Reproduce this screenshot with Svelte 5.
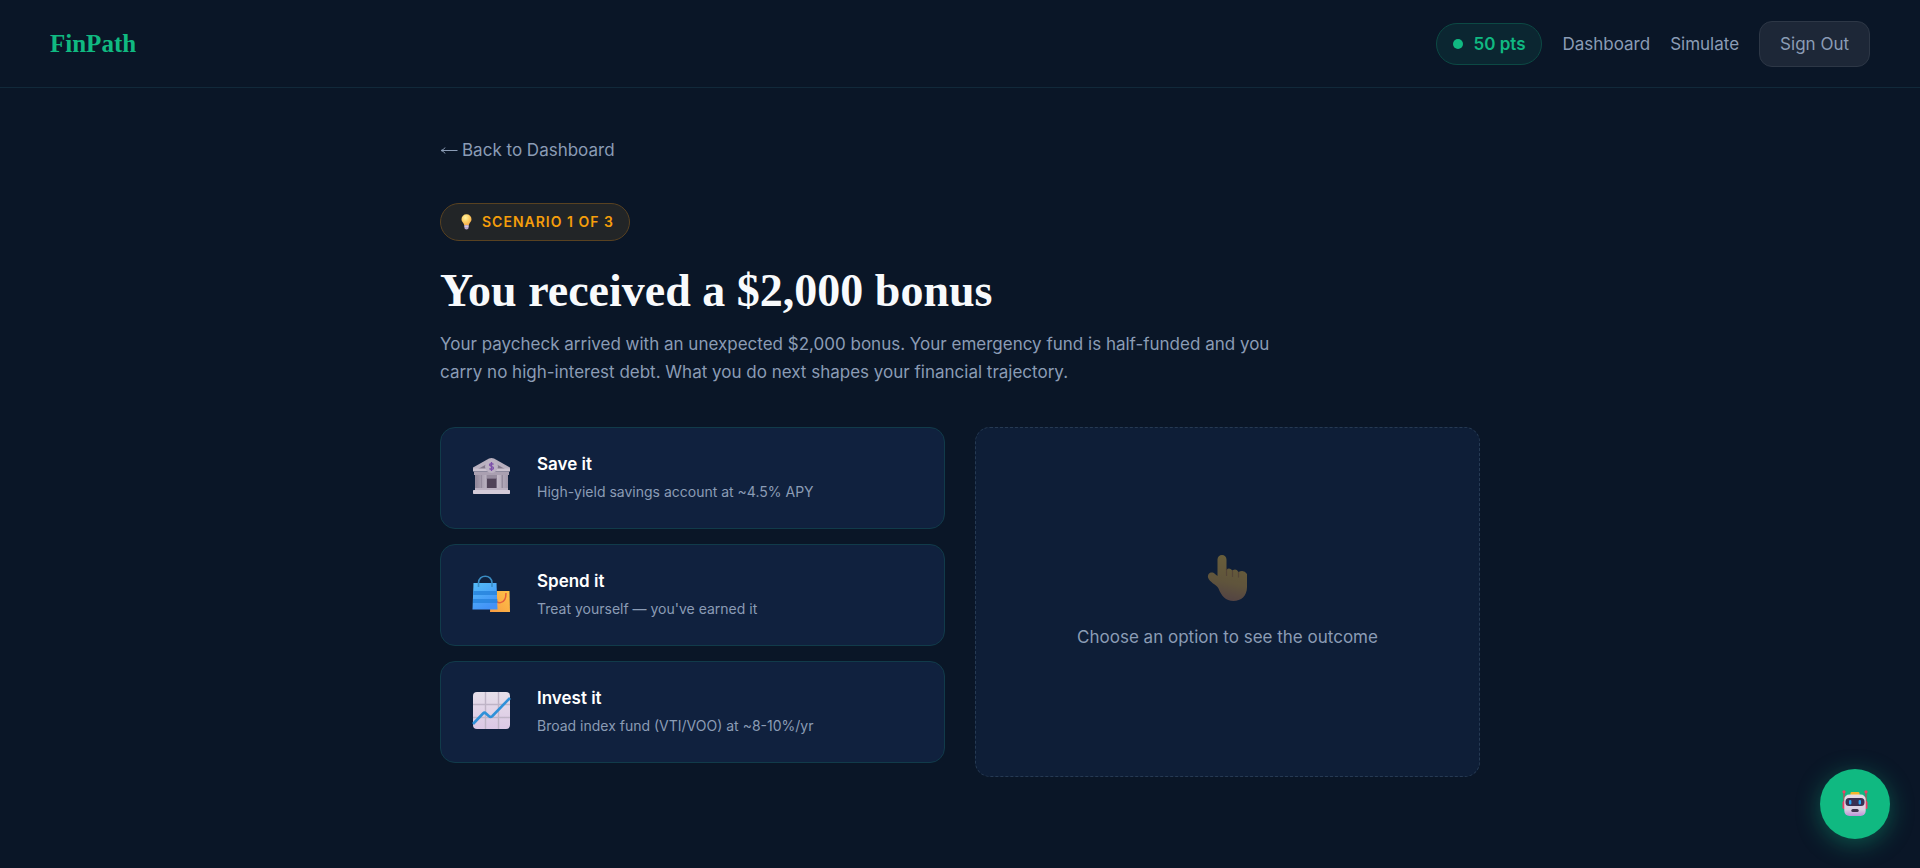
<script>
  const options = [
    { id: 'save', title: 'Save it', description: 'High-yield savings account at ~4.5% APY' },
    { id: 'spend', title: 'Spend it', description: "Treat yourself — you've earned it" },
    { id: 'invest', title: 'Invest it', description: 'Broad index fund (VTI/VOO) at ~8-10%/yr' }
  ]

  let points = 50
</script>

<nav class="navbar">
  <a class="logo" href="#home">FinPath</a>
  <div class="nav-links">
    <span class="points"><span class="dot"></span>{points} pts</span>
    <a href="#dashboard">Dashboard</a>
    <a href="#simulate">Simulate</a>
    <button class="sign-out" type="button">Sign Out</button>
  </div>
</nav>

<main>
  <a class="back" href="#dashboard">
    <svg width="18" height="12" viewBox="0 0 18 12" fill="none" stroke="currentColor" aria-hidden="true">
      <path d="M17.500 6.500H1.500M5 3.500Q4 5.800 1 6.500Q4 7.200 5 9.500" />
    </svg>
    Back to Dashboard
  </a>

  <div class="badge">
    <svg width="18" height="18" viewBox="0 0 18 18" aria-hidden="true">
      <defs>
        <radialGradient id="bulb" cx=".4" cy=".3" r=".7">
          <stop offset="0" stop-color="#fff3a0" />
          <stop offset=".5" stop-color="#fdd067" />
          <stop offset="1" stop-color="#f5a94a" />
        </radialGradient>
      </defs>
      <path d="M9.500 1.200a5 5 0 0 0-5 5c0 2.100 1.500 3 2.300 4.700.3.700.4 1.300.7 1.800h4c.3-.5.4-1.100.7-1.800.8-1.700 2.300-2.600 2.300-4.700a5 5 0 0 0-5-5z" fill="url(#bulb)" />
      <path d="M7.400 12h4.200v2.400c0 1.300-.9 2-2.100 2s-2.100-.7-2.100-2z" fill="#b9a6cb" />
      <path d="M7.400 13.300h4.200" stroke="#e5dced" stroke-width=".8" />
    </svg>
    <span>SCENARIO 1 OF 3</span>
  </div>

  <h1>You received a $2,000 bonus</h1>
  <p class="intro">
    Your paycheck arrived with an unexpected $2,000 bonus. Your emergency fund is half-funded and you
    carry no high-interest debt. What you do next shapes your financial trajectory.
  </p>

  <div class="scenario">
    <div class="options">
      {#each options as option (option.id)}
        <button class="option" type="button">
          <svg width="42" height="42" viewBox="0 0 42 42" aria-hidden="true">
            {#if option.id === 'save'}
              <defs>
                <linearGradient id="column">
                  <stop offset="0" stop-color="#91879a" />
                  <stop offset=".5" stop-color="#d2cad6" />
                  <stop offset="1" stop-color="#a298aa" />
                </linearGradient>
              </defs>
              <path d="M4 17h33v16H4z" fill="#958b9d" />
              <path d="M16 22h9v11h-9z" fill="#504358" />
              <path d="M15.500 21.500h10V33" fill="none" stroke="#7c7085" />
              <path d="M5 18h5v15H5zM11 18h4.500v15H11zM26 18h4.500v15H26zM32 18h5v15h-5z" fill="url(#column)" />
              <path d="M2 13v-2.500L18 1.600q2.500-1.200 5 0l16 8.900V13z" fill="#b9b0bf" />
              <path d="M7 12 20.500 4.500 34 12z" fill="#82788b" />
              <rect x="2" y="11.500" width="37" height="3" rx=".5" fill="#cbc2cf" />
              <rect x="3" y="14.500" width="35" height="3.500" rx=".5" fill="#aaa0b1" />
              <rect x="4" y="31" width="33" height="3" fill="#bbb1c1" />
              <rect x="2" y="33" width="37" height="4" rx=".7" fill="#d4cbd8" />
              <circle cx="20.500" cy="9.500" r="6.500" fill="#bcb2c3" />
              <path d="M20.500 5v9M22.500 7.500c-1-1.200-4-1-4 .5s4 1.400 4 3-3 1.800-4 .5" fill="none" stroke="#7d50aa" stroke-width="1.300" />
            {:else if option.id === 'spend'}
              <defs>
                <linearGradient id="bag" x1="0" y1="0" x2=".5" y2="1">
                  <stop offset="0" stop-color="#55bdf8" />
                  <stop offset="1" stop-color="#4392f7" />
                </linearGradient>
                <linearGradient id="small-bag" x1="1" y1="0" x2="0" y2="1">
                  <stop offset="0" stop-color="#ffc348" />
                  <stop offset="1" stop-color="#f79b42" />
                </linearGradient>
              </defs>
              <path d="M20 17h18.500l.5 21H19z" fill="url(#small-bag)" />
              <path d="M35 19c0 13-11 11-11 5" fill="none" stroke="#e45d3d" stroke-width="1.500" />
              <path d="M2.500 9h23l1 26.500h-25z" fill="url(#bag)" />
              <path d="M2.500 17h23.500v4H2.200zM2.100 25h24.200v4H2z" fill="#2582db" opacity=".8" />
              <path d="M7.500 13V9c0-9 13.500-9 13.500 0v4" fill="none" stroke="#3a8cc2" stroke-width="1.600" />
            {:else}
              <defs>
                <linearGradient id="paper" x1="0" y1="0" x2="0" y2="1">
                  <stop offset="0" stop-color="#e6dfe9" />
                  <stop offset="1" stop-color="#dcc8e5" />
                </linearGradient>
              </defs>
              <rect x="2" y="1" width="37" height="37" rx="4" fill="url(#paper)" />
              <path d="M14.500 1v37M27.500 1v37M2 13.500h37M2 26.500h37" stroke="#bfb4c6" stroke-width="1.400" />
              <path d="m2 33 10-10.500q1.500-1.500 3 0l3 2.700q1.500 1.500 3.200 0L39 7" fill="none" stroke="#2f91d9" stroke-width="2.600" />
            {/if}
          </svg>
          <span class="option-text">
            <span class="option-title">{option.title}</span>
            <span class="option-description">{option.description}</span>
          </span>
        </button>
      {/each}
    </div>

    <section class="outcome">
      <svg class="hand" width="50" height="50" viewBox="0 0 50 50" aria-hidden="true">
        <defs>
          <linearGradient id="skin" x1=".6" y1="0" x2=".4" y2="1">
            <stop offset="0" stop-color="#f0c040" />
            <stop offset=".6" stop-color="#d9a544" />
            <stop offset="1" stop-color="#b87858" />
          </linearGradient>
        </defs>
        <path d="M14.500 6.500a4.500 4.500 0 0 1 9 0V17q2.500-3 6 .5 3.500-2.500 6 1.500 5.500-2.500 8.500 2v13c0 9-6 14-13.500 14-8 0-12-5-15-12.500-2-4-9-6-10.500-11-.7-4.500 4-6.500 7-3.500l2.500 2z" fill="url(#skin)" />
        <path d="M23.500 15v8M29.500 17.500V24M35.500 19v5.500" fill="none" stroke="#a76231" stroke-width="1.200" opacity=".6" />
      </svg>
      <p>Choose an option to see the outcome</p>
    </section>
  </div>
</main>

<button class="assistant" type="button" aria-label="Open assistant">
  <svg width="30" height="30" viewBox="0 0 30 30" aria-hidden="true">
    <defs>
      <linearGradient id="robot" x1="0" y1="0" x2="0" y2="1">
        <stop offset="0" stop-color="#e6dde6" />
        <stop offset=".7" stop-color="#d9cfe1" />
        <stop offset="1" stop-color="#bd91d7" />
      </linearGradient>
    </defs>
    <path d="M4 3v16M26 3v16" stroke="#b34e61" stroke-width="1.400" />
    <circle cx="4" cy="2.800" r="1.600" fill="#f43e66" />
    <circle cx="26" cy="2.800" r="1.600" fill="#f43e66" />
    <rect x="2.500" y="12" width="3.500" height="8" rx="1.500" fill="#e9416b" />
    <rect x="24" y="12" width="3.500" height="8" rx="1.500" fill="#e9416b" />
    <rect x="10.500" y="3" width="9" height="4" rx="1.300" fill="#f5b52c" />
    <rect x="4.300" y="5.500" width="21.400" height="21.500" rx="5" fill="url(#robot)" />
    <rect x="5.500" y="9" width="19" height="8" rx="3.500" fill="#3a3052" />
    <rect x="9" y="11" width="2.400" height="4.500" rx="1" fill="#28a5f4" />
    <rect x="18.600" y="11" width="2.400" height="4.500" rx="1" fill="#28a5f4" />
    <rect x="11.300" y="20" width="7.400" height="3" rx="1.500" fill="#40334f" />
  </svg>
</button>

<style>
  :global(body) {
    background: #0a1627;
    color: #8b9cb5;
    font-family: Inter, 'Open Sans', sans-serif;
    font-size: 17px;
    line-height: 28px;
  }

  a {
    color: inherit;
    text-decoration: none;
  }

  button {
    font: inherit;
    color: inherit;
    cursor: pointer;
  }

  svg {
    display: block;
    flex-shrink: 0;
  }

  .navbar {
    box-sizing: border-box;
    display: flex;
    align-items: center;
    justify-content: space-between;
    min-height: 88px;
    padding: 0 50px;
    border-bottom: 1px solid #11293a;
  }

  .logo {
    color: #10b981;
    font-family: 'Liberation Serif', serif;
    font-size: 25px;
    font-weight: 700;
  }

  .nav-links {
    display: flex;
    align-items: center;
    gap: 20px;
  }

  .points {
    display: flex;
    align-items: center;
    gap: 10px;
    padding: 6px 16px;
    border: 1px solid #0c4944;
    border-radius: 25px;
    background: #0b2631;
    color: #10b981;
    font-weight: 600;
  }

  .dot {
    width: 10px;
    height: 10px;
    border-radius: 50%;
    background: #10b981;
  }

  .sign-out {
    padding: 8px 20px;
    border: 1px solid #2d3746;
    border-radius: 13px;
    background: #1d2737;
  }

  main {
    box-sizing: border-box;
    max-width: 1140px;
    margin: 0 auto;
    padding: 48px 50px;
  }

  .back {
    display: flex;
    align-items: center;
    gap: 4px;
    width: fit-content;
    margin-bottom: 39px;
  }

  .badge {
    display: flex;
    align-items: center;
    gap: 7px;
    width: fit-content;
    padding: 4px 15px 4px 16px;
    border: 1px solid #594221;
    border-radius: 25px;
    background: #222527;
    color: #f59e0b;
    font-size: 14px;
    font-weight: 600;
    letter-spacing: 1px;
  }

  h1 {
    margin: 23px 0 13px;
    color: #f8fafc;
    font-family: 'Liberation Serif', serif;
    font-size: 46px;
    font-weight: 700;
    line-height: 53px;
  }

  .intro {
    max-width: 850px;
    margin: 0 0 41px;
  }

  .scenario {
    display: grid;
    grid-template-columns: 1fr 1fr;
    align-items: start;
    gap: 30px;
  }

  .options {
    display: flex;
    flex-direction: column;
    gap: 15px;
  }

  .option {
    display: flex;
    align-items: center;
    gap: 24px;
    padding: 22px 30px;
    border: 1px solid #113b4a;
    border-radius: 15px;
    background: #10213e;
    text-align: left;
  }

  .option:hover {
    border-color: #10b981;
  }

  .option-text {
    display: flex;
    flex-direction: column;
  }

  .option-title {
    color: #fff;
    font-weight: 600;
  }

  .option-description {
    font-size: 14px;
  }

  .outcome {
    box-sizing: border-box;
    display: flex;
    flex-direction: column;
    align-items: center;
    justify-content: center;
    gap: 20px;
    min-height: 350px;
    border: 1px dashed #263a53;
    border-radius: 15px;
    background: #0e1e37;
  }

  .outcome p {
    margin: 0;
  }

  .hand {
    opacity: .4;
  }

  .assistant {
    position: fixed;
    right: 30px;
    bottom: 29px;
    display: flex;
    align-items: center;
    justify-content: center;
    width: 70px;
    height: 70px;
    padding: 0;
    border: 0;
    border-radius: 50%;
    background: #10b981;
    box-shadow: 0 5px 25px rgba(16, 185, 129, .4);
  }

  @media (max-width: 800px) {
    .scenario {
      grid-template-columns: 1fr;
    }
  }
</style>
